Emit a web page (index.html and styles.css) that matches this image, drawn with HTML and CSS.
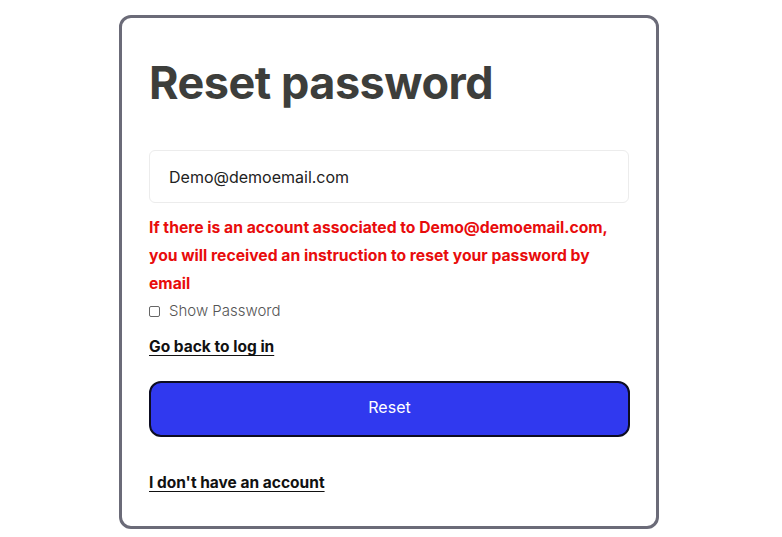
FILE: index.html
```html
<!DOCTYPE html>
<html>
<head>
<meta charset="utf-8">
<link rel="stylesheet" href="styles.css">
</head>
<body>
<div class="card">
  <h1 class="title">Reset password</h1>
  <div class="field">Demo@demoemail.com</div>
  <p class="notice">If there is an account associated to Demo@demoemail.com, you will received an instruction to reset your password by email</p>
  <label class="show"><span class="box"></span>Show Password</label>
  <a class="link back" href="#">Go back to log in</a>
  <button class="btn">Reset</button>
  <a class="link noacc" href="#">I don't have an account</a>
</div>
</body>
</html>
```
FILE: styles.css
```css
html, body { margin: 0; padding: 0; background: #fff; }
body { font-family: Inter, "Noto Sans", sans-serif; }
.card {
  box-sizing: border-box;
  width: 540px;
  height: 514px;
  margin: 15px 0 0 119px;
  border: 3px solid #6b6b78;
  border-radius: 12px;
  padding: 0 27px 0 27px;
  display: flex;
  flex-direction: column;
  align-items: flex-start;
}
.title {
  margin: 39px 0 0 0;
  font-size: 45px;
  line-height: 52px;
  font-weight: 700;
  color: #3d3e3b;
  letter-spacing: -0.5px;
}
.field {
  box-sizing: border-box;
  margin-top: 41px;
  width: 480px;
  height: 53px;
  border: 1px solid #ececec;
  border-radius: 6px;
  padding: 0 0 0 19px;
  display: flex;
  align-items: center;
  font-size: 16px;
  color: #222;
}
.notice {
  margin: 11px 0 0 0;
  font-size: 15.7px;
  line-height: 28px;
  font-weight: 700;
  color: #e80c0c;
}
.show {
  display: flex;
  align-items: center;
  font-size: 15px;
  font-weight: 300;
  color: #555;
  line-height: 20px;
  margin-top: 3px;
}
.box {
  width: 9px;
  height: 9px;
  border: 1px solid #666;
  border-radius: 2px;
  margin-right: 9px;
}
.link {
  color: #111;
  font-weight: 700;
  font-size: 15.5px;
  line-height: 20px;
  text-decoration: underline;
  text-underline-offset: 3px;
}
.back { margin-top: 16px; }
.btn {
  box-sizing: border-box;
  margin-top: 24px;
  width: 481px;
  height: 56px;
  padding: 0 0 4px 0;
  background: #3039ef;
  border: 2px solid #0d0d22;
  border-radius: 12px;
  color: #fff;
  font-family: inherit;
  font-size: 16px;
  font-weight: 400;
}
.noacc { margin-top: 36px; }
```
